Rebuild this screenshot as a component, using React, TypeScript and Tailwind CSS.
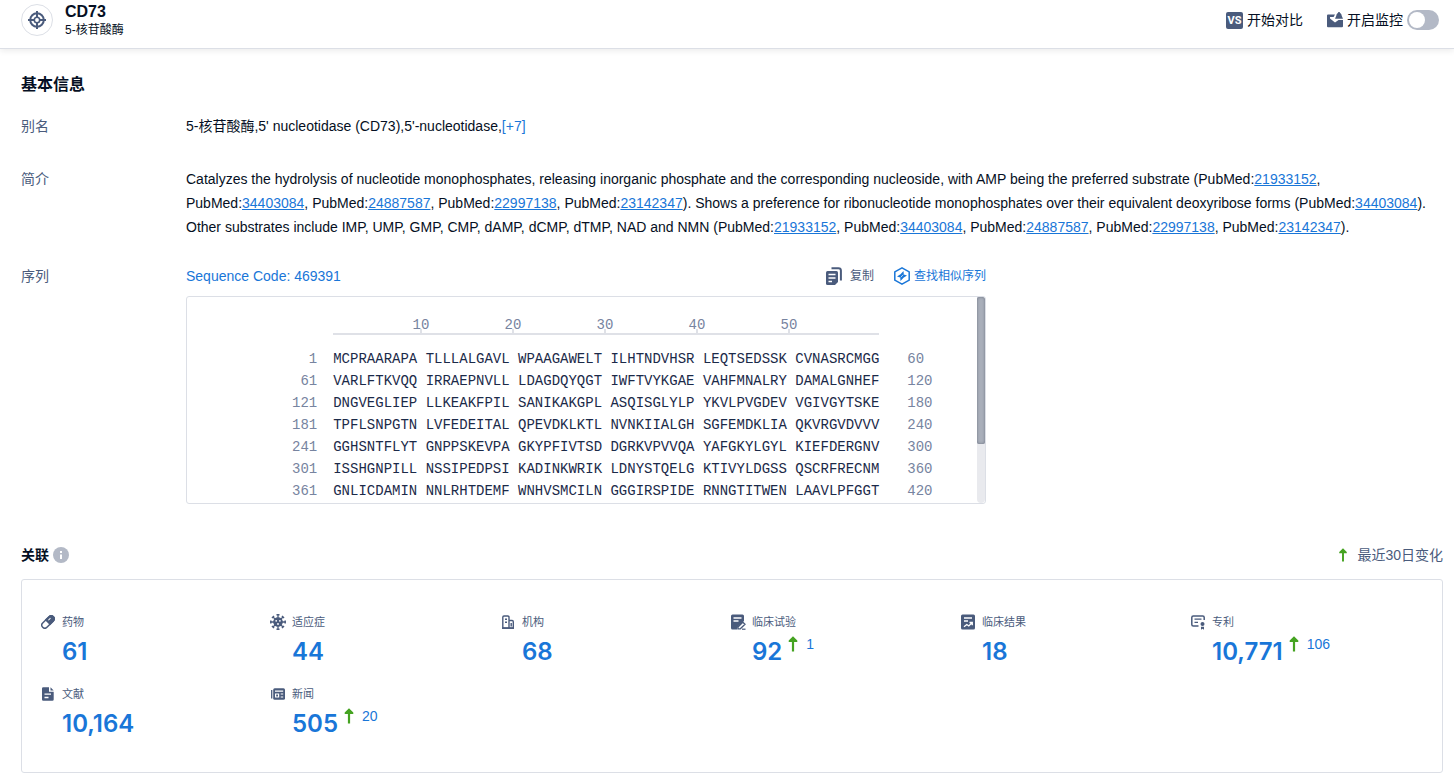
import { FC, ReactNode } from 'react';

const SEQUENCE: string[] = [
  'MCPRAARAPA TLLLALGAVL WPAAGAWELT ILHTNDVHSR LEQTSEDSSK CVNASRCMGG',
  'VARLFTKVQQ IRRAEPNVLL LDAGDQYQGT IWFTVYKGAE VAHFMNALRY DAMALGNHEF',
  'DNGVEGLIEP LLKEAKFPIL SANIKAKGPL ASQISGLYLP YKVLPVGDEV VGIVGYTSKE',
  'TPFLSNPGTN LVFEDEITAL QPEVDKLKTL NVNKIIALGH SGFEMDKLIA QKVRGVDVVV',
  'GGHSNTFLYT GNPPSKEVPA GKYPFIVTSD DGRKVPVVQA YAFGKYLGYL KIEFDERGNV',
  'ISSHGNPILL NSSIPEDPSI KADINKWRIK LDNYSTQELG KTIVYLDGSS QSCRFRECNM',
  'GNLICDAMIN NNLRHTDEMF WNHVSMCILN GGGIRSPIDE RNNGTITWEN LAAVLPFGGT',
];

const TargetIcon: FC = () => (
  <svg className="h-[18px] w-[18px]" viewBox="0 0 18 18" fill="none" stroke="#4a5b7c" strokeWidth="2">
    <circle cx="9" cy="9" r="6.8" />
    <circle cx="9" cy="9" r="2.7" strokeWidth="1.6" />
    <path d="M9 0v6M9 12v6M0 9h6M12 9h6" />
  </svg>
);

const VsIcon: FC = () => (
  <span className="flex h-[17px] w-[17px] items-center justify-center rounded-xs bg-[#4a5b7c] font-['Roboto',sans-serif] text-[11px] leading-none font-bold text-white">
    VS
  </span>
);

const MonitorIcon: FC = () => (
  <svg className="h-4 w-4" viewBox="0 0 16 16" fill="#4a5b7c">
    <path d="M0 3.500A1 1 0 0 1 1 2.500H8L6.600 5H3V6.500L8 10.500 11.500 8H16V14.300A1 1 0 0 1 15 15.300H1A1 1 0 0 1 0 14.300z" />
    <path d="M12 0c.6 0 1 .4 1 1 1.200.5 1.700 1.600 1.700 2.800L16 6.700H8L9.300 3.800C9.300 2.600 9.800 1.500 11 1c0-.6.4-1 1-1z" />
  </svg>
);

const CopyIcon: FC = () => (
  <svg className="h-[18px] w-4" viewBox="0 0 16 18" fill="none">
    <path d="M5.500 1.200H12.500Q14.900 1.200 14.900 3.600V13.500" stroke="#4a5b7c" strokeWidth="2" />
    <path d="M1.500 4H10.500Q12 4 12 5.500V15L9 18H1.500Q0 18 0 16.500V5.500Q0 4 1.500 4z" fill="#4a5b7c" />
    <path d="M2.500 7.500H9.500M2.500 11H9.500M2.500 14.500H6" stroke="#fff" strokeWidth="1.5" />
  </svg>
);

const SimilarIcon: FC = () => (
  <svg className="h-[18px] w-4" viewBox="0 0 16 18" fill="none">
    <path d="M8 .8 15.200 4.800V13.200L8 17.200.8 13.200V4.800z" stroke="#1976d8" strokeWidth="1.500" strokeLinejoin="round" />
    <path d="M9.500 4 9.800 7.600 13 8.500 9.500 10.700 6.500 14 6.200 10.400 3 9.500 6.500 7.300z" fill="#1976d8" />
    <path d="m6.800 10.300 2.400-2.600" stroke="#fff" strokeWidth=".7" />
  </svg>
);

const InfoIcon: FC = () => (
  <svg className="h-4 w-4" viewBox="0 0 16 16">
    <circle cx="8" cy="8" r="8" fill="#b3b9c6" />
    <path d="M7 4h2v2H7zM7 7.500h2V12H7z" fill="#fff" />
  </svg>
);

const UpArrow: FC<{ className: string }> = ({ className }) => (
  <svg className={className} viewBox="0 0 10 16">
    <path d="M5 .3 9.300 4.600V6H6.100v9.500H3.900V6H.7V4.600z" fill="#45a321" />
  </svg>
);

const DrugIcon: FC = () => (
  <svg className="h-3.5 w-3.5" viewBox="0 0 14 14" fill="none">
    <g transform="rotate(45 7 7)" stroke="#4a5b7c" strokeWidth="1.500">
      <rect x="4" y="-.5" width="6" height="15" rx="3" />
      <path d="M4 7V2.500a3 3 0 0 1 6 0V7z" fill="#4a5b7c" />
      <path d="M6 2.500v3" stroke="#fff" strokeWidth="1" />
    </g>
  </svg>
);

const VirusIcon: FC = () => (
  <svg className="-mx-px h-4 w-4" viewBox="0 0 16 16" fill="none" stroke="#4a5b7c">
    <circle cx="8" cy="8" r="4.800" fill="#4a5b7c" stroke="none" />
    <path d="M8 1v14M1 8h14M3 3l10 10M13 3 3 13" strokeWidth="1.300" />
    <path d="M6.500.8h3M6.500 15.200h3M.8 6.500v3M15.200 6.500v3M2 4l2-2M12 2l2 2M2 12l2 2M12 14l2-2" strokeWidth="1.500" />
    <g fill="#fff" stroke="none">
      <circle cx="6.200" cy="6.800" r=".9" />
      <circle cx="9.900" cy="6.800" r=".9" />
      <circle cx="8" cy="10" r=".9" />
    </g>
  </svg>
);

const OrgIcon: FC = () => (
  <svg className="h-3.5 w-3.5" viewBox="0 0 14 14" fill="none" stroke="#4a5b7c" strokeWidth="1.400">
    <path d="M8 13V2.200Q8 1 6.800 1H3Q1.800 1 1.800 2.200V13H12.300V6.700Q12.300 5.500 11.100 5.500H8" />
    <path d="M4 4.200h2M4 7.200h2M10.200 8v3.500" />
    <path d="M1 13.200h12" />
  </svg>
);

const TrialIcon: FC = () => (
  <svg className="h-4 w-3.5 overflow-visible" viewBox="0 0 14 16" fill="none">
    <path d="M1.500.5H11.500Q13 .5 13 2V7L7 12.500 6 15.500H1.500Q0 15.500 0 14V2Q0 .5 1.500.5z" fill="#4a5b7c" />
    <path d="M2.500 4h8M2.500 7h5" stroke="#fff" strokeWidth="1.300" />
    <path d="m7 13 4.800-4.800L14 10.200l-4.700 4.600H7z" fill="#fff" stroke="#4a5b7c" strokeWidth="1.300" />
    <path d="M11 15.200H14.500" stroke="#4a5b7c" strokeWidth="1.200" />
  </svg>
);

const ResultIcon: FC = () => (
  <svg className="h-4 w-3.5" viewBox="0 0 14 16" fill="none">
    <rect y=".5" width="14" height="15" rx="1.500" fill="#4a5b7c" />
    <path d="M3 4h8M3 7h4M3 12.800l2.800-2.300 2 1.500L11 8.800M8.500 8.500h2.800v2.800" stroke="#fff" strokeWidth="1.300" />
  </svg>
);

const PatentIcon: FC = () => (
  <svg className="h-4 w-3.5" viewBox="0 0 14 16" fill="none" stroke="#4a5b7c" strokeWidth="1.500">
    <path d="M13.200 6V3.500Q13.200 2 11.700 2H2.300Q.8 2 .8 3.500v7Q.8 12 2.300 12H7.500" />
    <path d="M3.500 5.200h7M3.500 8.300H7" strokeWidth="1.300" />
    <circle cx="11.500" cy="10" r="2" fill="#4a5b7c" stroke="none" />
    <path d="M10 12.800h3v3l-1.500-1-1.500 1z" fill="#4a5b7c" stroke="none" />
  </svg>
);

const PaperIcon: FC = () => (
  <svg className="h-3.5 w-3.5" viewBox="0 0 14 14" fill="none">
    <path d="M2.300.3H8V4.700H12.700V12.500Q12.700 13.800 11.400 13.800H2.300Q1 13.800 1 12.500V1.600Q1 .3 2.300.3z" fill="#4a5b7c" />
    <path d="M9.500.3 12.700 3.500H9.500z" fill="#4a5b7c" />
    <path d="M3.500 7.200h6.500M3.500 10.500h4" stroke="#fff" strokeWidth="1.300" />
  </svg>
);

const NewsIcon: FC = () => (
  <svg className="h-3.5 w-3.5" viewBox="0 0 14 14" fill="none">
    <path d="M.7 3v8.500" stroke="#4a5b7c" strokeWidth="1.300" />
    <rect x="2.200" y="1.200" width="11.800" height="11.600" rx="1.500" fill="#4a5b7c" />
    <path d="M4 4.200h8.200M9.700 7h2.500M9.700 10h2.500" stroke="#fff" strokeWidth="1.200" />
    <path d="M4.600 7h3v3h-3z" stroke="#fff" strokeWidth="1.200" />
  </svg>
);

interface StatProps {
  icon: ReactNode;
  label: string;
  value: string;
  change?: string;
}

const STATS: StatProps[] = [
  { icon: <DrugIcon />, label: '药物', value: '61' },
  { icon: <VirusIcon />, label: '适应症', value: '44' },
  { icon: <OrgIcon />, label: '机构', value: '68' },
  { icon: <TrialIcon />, label: '临床试验', value: '92', change: '1' },
  { icon: <ResultIcon />, label: '临床结果', value: '18' },
  { icon: <PatentIcon />, label: '专利', value: '10,771', change: '106' },
  { icon: <PaperIcon />, label: '文献', value: '10,164' },
  { icon: <NewsIcon />, label: '新闻', value: '505', change: '20' },
];

const Stat: FC<StatProps> = ({ icon, label, value, change }) => (
  <div>
    <div className="flex h-4 items-center gap-[7px] text-[11px] text-[#4a5b7c]">
      {icon}
      <span className="pt-0.5">{label}</span>
    </div>
    <div className="mt-2 flex h-7 pl-[21px] text-[#1976d8]">
      <a href="#" className="font-['Inter',sans-serif] text-2xl leading-7 font-semibold">
        {value}
      </a>
      {change && (
        <a href="#" className="flex h-3 items-center gap-2 pl-1.5 text-sm">
          <UpArrow className="h-4 w-2.5" />
          {change}
        </a>
      )}
    </div>
  </div>
);

const PubMed: FC<{ id: string }> = ({ id }) => (
  <>
    PubMed:
    <a href={`#${id}`} className="text-[#1976d8] underline">
      {id}
    </a>
  </>
);

const Row: FC<{ label: string; className: string; children: ReactNode }> = ({ label, className, children }) => (
  <div className={`flex leading-6 ${className}`}>
    <div className="w-[165px] shrink-0 text-[#4a5b7c]">{label}</div>
    <div className="min-w-0 flex-1">{children}</div>
  </div>
);

const SequenceBox: FC = () => (
  <div className="mt-2 flex h-52 max-w-[800px] overflow-hidden rounded-[3px] border border-[#dcdfe6] font-['Liberation_Mono',monospace] text-sm">
    <div className="flex-1 overflow-hidden pt-5 pl-[105px]">
      <div className="ml-[41px] w-[65ch] border-b-2 border-[#dfe1e7] pl-[5ch]">
        <div className="flex text-[#7784a0]">
          {[10, 20, 30, 40, 50].map((n) => (
            <div key={n} className="flex w-[92px] flex-col items-center">
              <span className="h-3 leading-4">{n}</span>
              <span className="h-1 w-0.5 bg-[#dfe1e7]" />
            </div>
          ))}
        </div>
      </div>
      <table className="mt-[13px] border-collapse leading-[22px]">
        <tbody>
          {SEQUENCE.map((line, i) => (
            <tr key={line}>
              <td className="w-[41px] pr-4 text-right text-[#7784a0]">{i * 60 + 1}</td>
              <td className="whitespace-pre text-[#1b2a49]">{line}</td>
              <td className="pl-7 text-[#7784a0]">{(i + 1) * 60}</td>
            </tr>
          ))}
        </tbody>
      </table>
    </div>
    <div className="w-2 rounded-b bg-[#e9eaee]">
      <div className="h-[147px] rounded-xs bg-[#a9afba] shadow-[inset_0_0_3px_#6b7280]" />
    </div>
  </div>
);

export default function App() {
  return (
    <div className="bg-white font-['Liberation_Sans','Noto_Sans_CJK_SC',sans-serif] text-sm text-[#050f23]">
      <header className="flex items-center justify-between border-b border-[#dcdfe6] pt-px pr-[15px] pb-[9px] pl-[21px] shadow-[0_2px_6px_rgba(0,0,0,0.08)]">
        <div className="flex items-center gap-3">
          <div className="flex h-8 w-8 items-center justify-center rounded-full border border-[#dcdfe6]">
            <TargetIcon />
          </div>
          <div className="pt-0.5">
            <h1 className="text-base leading-[18px] font-bold">CD73</h1>
            <p className="text-xs leading-[18px]">5-核苷酸酶</p>
          </div>
        </div>
        <div className="flex items-center gap-6">
          <button type="button" className="flex items-center gap-1">
            <VsIcon />
            开始对比
          </button>
          <label className="flex items-center gap-1">
            <MonitorIcon />
            <span>开启监控</span>
            <input
              type="checkbox"
              role="switch"
              className="h-5 w-8 appearance-none rounded-full bg-[#b3b9c6] p-0.5 before:block before:h-4 before:w-4 before:rounded-full before:bg-white checked:bg-[#1976d8] checked:before:ml-3"
            />
          </label>
        </div>
      </header>

      <main className="pt-6 pr-[11px] pb-[6px] pl-[21px]">
        <h2 className="text-base leading-6 font-bold">基本信息</h2>

        <Row label="别名" className="mt-[17px]">
          5-核苷酸酶,5' nucleotidase (CD73),5'-nucleotidase,
          <button type="button" className="text-[#1976d8]">
            [+7]
          </button>
        </Row>

        <Row label="简介" className="mt-[29px]">
          <p>
            Catalyzes the hydrolysis of nucleotide monophosphates, releasing inorganic phosphate and the corresponding
            nucleoside, with AMP being the preferred substrate (<PubMed id="21933152" />, <PubMed id="34403084" />,{' '}
            <PubMed id="24887587" />, <PubMed id="22997138" />, <PubMed id="23142347" />). Shows a preference for
            ribonucleotide monophosphates over their equivalent deoxyribose forms (<PubMed id="34403084" />). Other
            substrates include IMP, UMP, GMP, CMP, dAMP, dCMP, dTMP, NAD and NMN (<PubMed id="21933152" />,{' '}
            <PubMed id="34403084" />, <PubMed id="24887587" />, <PubMed id="22997138" />, <PubMed id="23142347" />).
          </p>
        </Row>

        <Row label="序列" className="mt-[25px]">
          <div className="flex h-6 max-w-[800px] items-center justify-between">
            <a href="#sequence" className="text-[#1976d8]">
              Sequence Code: 469391
            </a>
            <div className="flex items-center gap-5 text-xs">
              <button type="button" className="flex items-center gap-2 text-[#4a5b7c]">
                <CopyIcon />
                复制
              </button>
              <button type="button" className="flex items-center gap-1 text-[#1976d8]">
                <SimilarIcon />
                查找相似序列
              </button>
            </div>
          </div>
          <SequenceBox />
        </Row>

        <div className="mt-[39px] flex h-6 items-center justify-between">
          <h2 className="flex items-center gap-1 font-bold">
            关联
            <InfoIcon />
          </h2>
          <div className="flex items-center gap-2 text-[#4a5b7c]">
            <UpArrow className="h-3.5 w-3" />
            最近30日变化
          </div>
        </div>

        <section className="mt-3 grid grid-cols-6 gap-y-5 rounded-[3px] border border-[#dcdfe6] pt-[34px] pr-[21px] pb-[34px] pl-[19px]">
          {STATS.map((stat) => (
            <Stat key={stat.label} {...stat} />
          ))}
        </section>
      </main>
    </div>
  );
}
